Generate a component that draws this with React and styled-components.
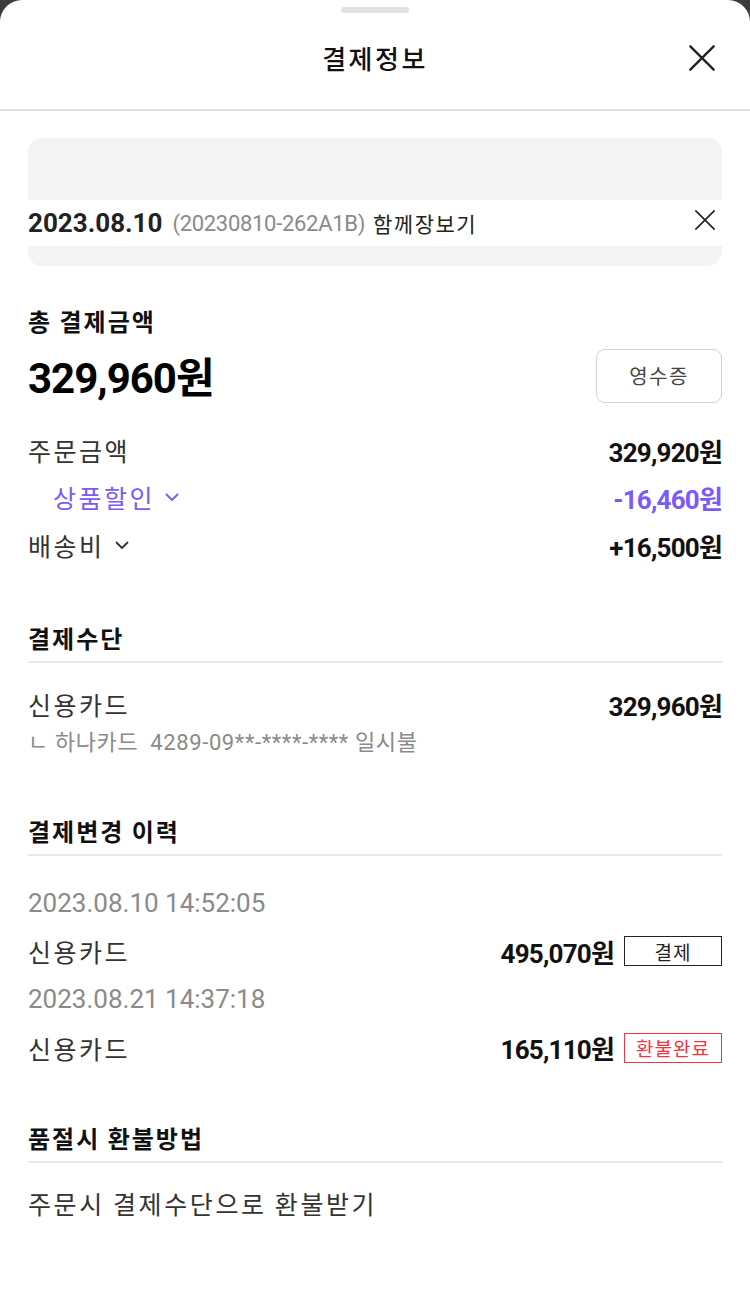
import React from 'react'
import styled, { createGlobalStyle } from 'styled-components'

const GlobalStyle = createGlobalStyle`
  * { box-sizing: border-box; }
  html, body { margin: 0; padding: 0; background: #3c3c3c; }
  body {
    font-family: Roboto, "Noto Sans CJK KR", sans-serif;
    color: #222;
  }
`

const Sheet = styled.div`
  width: 750px;
  min-height: 1300px;
  background: #fff;
  border-radius: 22px 22px 0 0;
  overflow: hidden;
`

const Handle = styled.div`
  width: 68px;
  height: 6px;
  border-radius: 3px;
  background: #e2e2e2;
  margin: 7px auto 0;
`

const Header = styled.header`
  position: relative;
  height: 98px;
  display: flex;
  align-items: center;
  justify-content: center;
  border-bottom: 2px solid #e0e0e0;
  padding-bottom: 8px;
`

const Title = styled.h1`
  margin: 0;
  font-family: "Noto Sans CJK KR", sans-serif;
  font-size: 26px;
  font-weight: 500;
  letter-spacing: 2.5px;
  color: #111;
`

const CloseButton = styled.button`
  position: absolute;
  right: ${p => p.$right}px;
  top: 50%;
  transform: translateY(-50%);
  margin-top: -3px;
  border: 0;
  background: none;
  padding: 0;
  display: flex;
`

const Body = styled.main`
  padding: 27px 28px 0;
`

const OrderCard = styled.div`
  background: #f4f4f4;
  border-radius: 14px;
  padding: 62px 0 20px;
`

const OrderRow = styled.div`
  position: relative;
  height: 46px;
  background: #fff;
  display: flex;
  align-items: center;
  gap: 10px;
`

const OrderDate = styled.span`
  font-family: Roboto, sans-serif;
  font-size: 26px;
  font-weight: 700;
  letter-spacing: 0;
  color: #222;
`

const OrderNo = styled.span`
  font-family: Roboto, sans-serif;
  font-size: 22px;
  letter-spacing: -0.3px;
  color: #8a8a8a;
`

const OrderName = styled.span`
  font-family: "Noto Sans CJK KR", sans-serif;
  font-size: 21px;
  letter-spacing: 1.5px;
  color: #222;
  margin-left: -2px;
`

const Section = styled.section`
  margin-top: ${p => p.$top || 0}px;
`

const SectionTitle = styled.h2`
  margin: 0;
  font-family: "Noto Sans CJK KR", sans-serif;
  font-size: 24px;
  font-weight: 700;
  letter-spacing: 2px;
  color: #111;
  line-height: 30px;
  padding-bottom: ${p => (p.$lined ? 8 : 0)}px;
  border-bottom: ${p => (p.$lined ? '2px solid #e8e8e8' : 'none')};
`

const TotalRow = styled.div`
  display: flex;
  justify-content: space-between;
  align-items: center;
  margin-top: 8px;
`

const TotalAmount = styled.div`
  font-family: Roboto, "Noto Sans CJK KR", sans-serif;
  font-size: 42px;
  font-weight: 700;
  letter-spacing: -1px;
  color: #000;
`

const ReceiptButton = styled.button`
  width: 126px;
  height: 54px;
  margin-top: 2px;
  border: 1.5px solid #d2d2d2;
  border-radius: 9px;
  background: #fff;
  font-family: "Noto Sans CJK KR", sans-serif;
  font-size: 20px;
  letter-spacing: 1.5px;
  color: #444;
`

const Row = styled.div`
  display: flex;
  justify-content: space-between;
  align-items: center;
  height: ${p => p.$h || 48}px;
`

const Label = styled.span`
  display: flex;
  align-items: center;
  gap: 10px;
  font-family: "Noto Sans CJK KR", sans-serif;
  font-size: 25px;
  letter-spacing: 2.5px;
  color: ${p => p.$color || '#333'};
  padding-left: ${p => p.$indent || 0}px;
`

const Amount = styled.span`
  display: flex;
  align-items: center;
  gap: 10px;
  font-family: Roboto, "Noto Sans CJK KR", sans-serif;
  font-size: 26px;
  font-weight: 700;
  letter-spacing: -0.8px;
  color: ${p => p.$color || '#111'};
`

const SubInfo = styled.div`
  font-family: Roboto, "Noto Sans CJK KR", sans-serif;
  font-size: 22px;
  color: #8a8a8a;
  letter-spacing: 0.6px;
  margin-top: -4px;
`

const DateText = styled.div`
  font-family: Roboto, sans-serif;
  font-size: 26px;
  color: #8a8a8a;
  letter-spacing: 0;
  line-height: 48px;
`

const Badge = styled.span`
  width: 98px;
  height: 30px;
  display: flex;
  align-items: center;
  justify-content: center;
  border: 1.5px solid ${p => p.$color};
  color: ${p => p.$color};
  font-family: "Noto Sans CJK KR", sans-serif;
  font-size: 19px;
  font-weight: 400;
  letter-spacing: 1px;
`

const Plain = styled.p`
  margin: 22px 0 0;
  font-family: "Noto Sans CJK KR", sans-serif;
  font-size: 25px;
  letter-spacing: 2.6px;
  color: #333;
`

function XIcon({ size, stroke = 2 }) {
  return (
    <svg width={size} height={size} viewBox="0 0 24 24" fill="none" stroke="#222" strokeWidth={stroke} strokeLinecap="round">
      <path d="M2 2 L22 22 M22 2 L2 22" />
    </svg>
  )
}

function Chevron({ color }) {
  return (
    <svg width="14" height="9" viewBox="0 0 14 9" fill="none" stroke={color} strokeWidth="1.8" strokeLinecap="round" strokeLinejoin="round">
      <path d="M1.5 1.5 L7 7 L12.5 1.5" />
    </svg>
  )
}

const PURPLE = '#7a5af8'

export default function App() {
  return (
    <>
      <GlobalStyle />
      <Sheet>
        <Handle />
        <Header>
          <Title>결제정보</Title>
          <CloseButton $right={34}>
            <XIcon size={28} stroke={2} />
          </CloseButton>
        </Header>

        <Body>
          <OrderCard>
            <OrderRow>
              <OrderDate>2023.08.10</OrderDate>
              <OrderNo>(20230810-262A1B)</OrderNo>
              <OrderName>함께장보기</OrderName>
              <CloseButton $right={6}>
                <XIcon size={22} stroke={1.8} />
              </CloseButton>
            </OrderRow>
          </OrderCard>

          <Section $top={40}>
            <SectionTitle>총 결제금액</SectionTitle>
            <TotalRow>
              <TotalAmount>329,960원</TotalAmount>
              <ReceiptButton>영수증</ReceiptButton>
            </TotalRow>
            <Row $h={48} style={{ marginTop: 21 }}>
              <Label>주문금액</Label>
              <Amount>329,920원</Amount>
            </Row>
            <Row $h={46}>
              <Label $color={PURPLE} $indent={25}>
                상품할인 <Chevron color={PURPLE} />
              </Label>
              <Amount $color={PURPLE}>-16,460원</Amount>
            </Row>
            <Row $h={50}>
              <Label>
                배송비 <Chevron color="#333" />
              </Label>
              <Amount>+16,500원</Amount>
            </Row>
          </Section>

          <Section $top={53}>
            <SectionTitle $lined>결제수단</SectionTitle>
            <Row $h={48} style={{ marginTop: 17 }}>
              <Label>신용카드</Label>
              <Amount>329,960원</Amount>
            </Row>
            <SubInfo>ㄴ 하나카드&nbsp;&nbsp;4289-09**-****-**** 일시불</SubInfo>
          </Section>

          <Section $top={60}>
            <SectionTitle $lined>결제변경 이력</SectionTitle>
            <DateText style={{ marginTop: 23 }}>2023.08.10 14:52:05</DateText>
            <Row $h={48}>
              <Label>신용카드</Label>
              <Amount>
                495,070원 <Badge $color="#222">결제</Badge>
              </Amount>
            </Row>
            <DateText>2023.08.21 14:37:18</DateText>
            <Row $h={49}>
              <Label>신용카드</Label>
              <Amount>
                165,110원 <Badge $color="#f2353f">환불완료</Badge>
              </Amount>
            </Row>
          </Section>

          <Section $top={51}>
            <SectionTitle $lined>품절시 환불방법</SectionTitle>
            <Plain>주문시 결제수단으로 환불받기</Plain>
          </Section>
        </Body>
      </Sheet>
    </>
  )
}
